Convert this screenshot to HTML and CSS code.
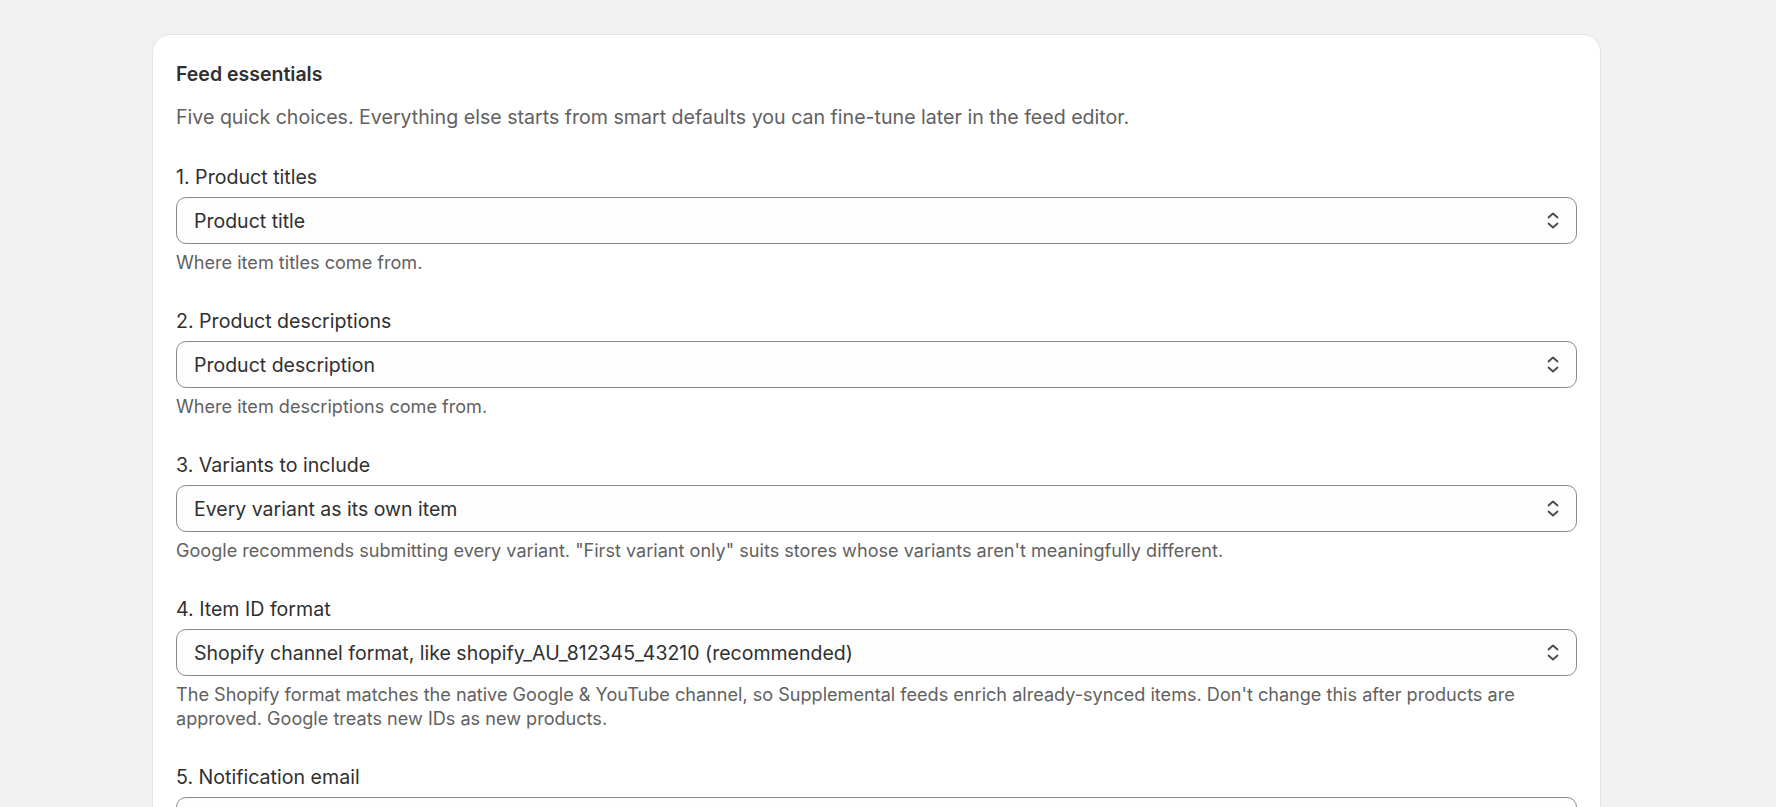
FILE: index.html
```html
<!DOCTYPE html>
<html lang="en">
<head>
<meta charset="utf-8">
<title>Feed essentials</title>
<link rel="stylesheet" href="styles.css">
</head>
<body>
<div class="page">
  <section class="card">
    <h2 class="card-title">Feed essentials</h2>
    <p class="card-intro">Five quick choices. Everything else starts from smart defaults you can fine-tune later in the feed editor.</p>

    <div class="fields">
      <div class="field">
        <label class="field-label">1. Product titles</label>
        <div class="select">
          <span class="select-value">Product title</span>
          <svg class="select-icon" viewBox="0 0 12 17" aria-hidden="true"><polyline points="1.5,5.5 6,1.5 10.5,5.5"/><polyline points="1.5,11.5 6,15.5 10.5,11.5"/></svg>
        </div>
        <p class="field-help">Where item titles come from.</p>
      </div>

      <div class="field">
        <label class="field-label">2. Product descriptions</label>
        <div class="select">
          <span class="select-value">Product description</span>
          <svg class="select-icon" viewBox="0 0 12 17" aria-hidden="true"><polyline points="1.5,5.5 6,1.5 10.5,5.5"/><polyline points="1.5,11.5 6,15.5 10.5,11.5"/></svg>
        </div>
        <p class="field-help">Where item descriptions come from.</p>
      </div>

      <div class="field">
        <label class="field-label">3. Variants to include</label>
        <div class="select">
          <span class="select-value">Every variant as its own item</span>
          <svg class="select-icon" viewBox="0 0 12 17" aria-hidden="true"><polyline points="1.5,5.5 6,1.5 10.5,5.5"/><polyline points="1.5,11.5 6,15.5 10.5,11.5"/></svg>
        </div>
        <p class="field-help">Google recommends submitting every variant. "First variant only" suits stores whose variants aren't meaningfully different.</p>
      </div>

      <div class="field">
        <label class="field-label">4. Item ID format</label>
        <div class="select">
          <span class="select-value">Shopify channel format, like shopify_AU_812345_43210 (recommended)</span>
          <svg class="select-icon" viewBox="0 0 12 17" aria-hidden="true"><polyline points="1.5,5.5 6,1.5 10.5,5.5"/><polyline points="1.5,11.5 6,15.5 10.5,11.5"/></svg>
        </div>
        <p class="field-help">The Shopify format matches the native Google &amp; YouTube channel, so Supplemental feeds enrich already-synced items. Don't change this after products are approved. Google treats new IDs as new products.</p>
      </div>

      <div class="field">
        <label class="field-label">5. Notification email</label>
        <div class="textbox"></div>
      </div>
    </div>
  </section>
</div>
</body>
</html>
```

FILE: styles.css
```css
* { box-sizing: border-box; }

html, body {
  margin: 0;
  padding: 0;
  background: #f1f1f1;
  font-family: Inter, "Noto Sans", "Liberation Sans", sans-serif;
  color: #303030;
}

body { overflow: hidden; }

.page {
  padding: 34px 0 0 152px;
}

.card {
  width: 1449px;
  background: #ffffff;
  border: 1px solid #e3e3e3;
  border-radius: 18px;
  padding: 26px 23px 40px 23px;
}

.card-title {
  margin: 0;
  font-size: 19.5px;
  line-height: 26px;
  font-weight: 600;
  color: #303030;
}

.card-intro {
  margin: 18px 0 0 0;
  font-size: 19.6px;
  line-height: 24px;
  color: #616161;
}

.fields {
  margin-top: 36px;
  display: flex;
  flex-direction: column;
  gap: 35px;
}

.field {
  display: flex;
  flex-direction: column;
}

.field-label {
  font-size: 19.6px;
  line-height: 24px;
  color: #303030;
}

.select,
.textbox {
  margin-top: 8px;
  height: 47px;
  border: 1px solid #8a8a8a;
  border-radius: 10px;
  background: #fdfdfd;
  display: flex;
  align-items: center;
  justify-content: space-between;
  padding: 0 17px 0 17px;
}

.select-value {
  font-size: 19.5px;
  line-height: 24px;
  color: #303030;
}

.select-icon {
  width: 12px;
  height: 17px;
  fill: none;
  stroke: #4a4a4a;
  stroke-width: 1.8;
  stroke-linecap: round;
  stroke-linejoin: round;
}

.field-help {
  margin: 6px 0 0 0;
  font-size: 18.1px;
  line-height: 24px;
  color: #616161;
}
```
